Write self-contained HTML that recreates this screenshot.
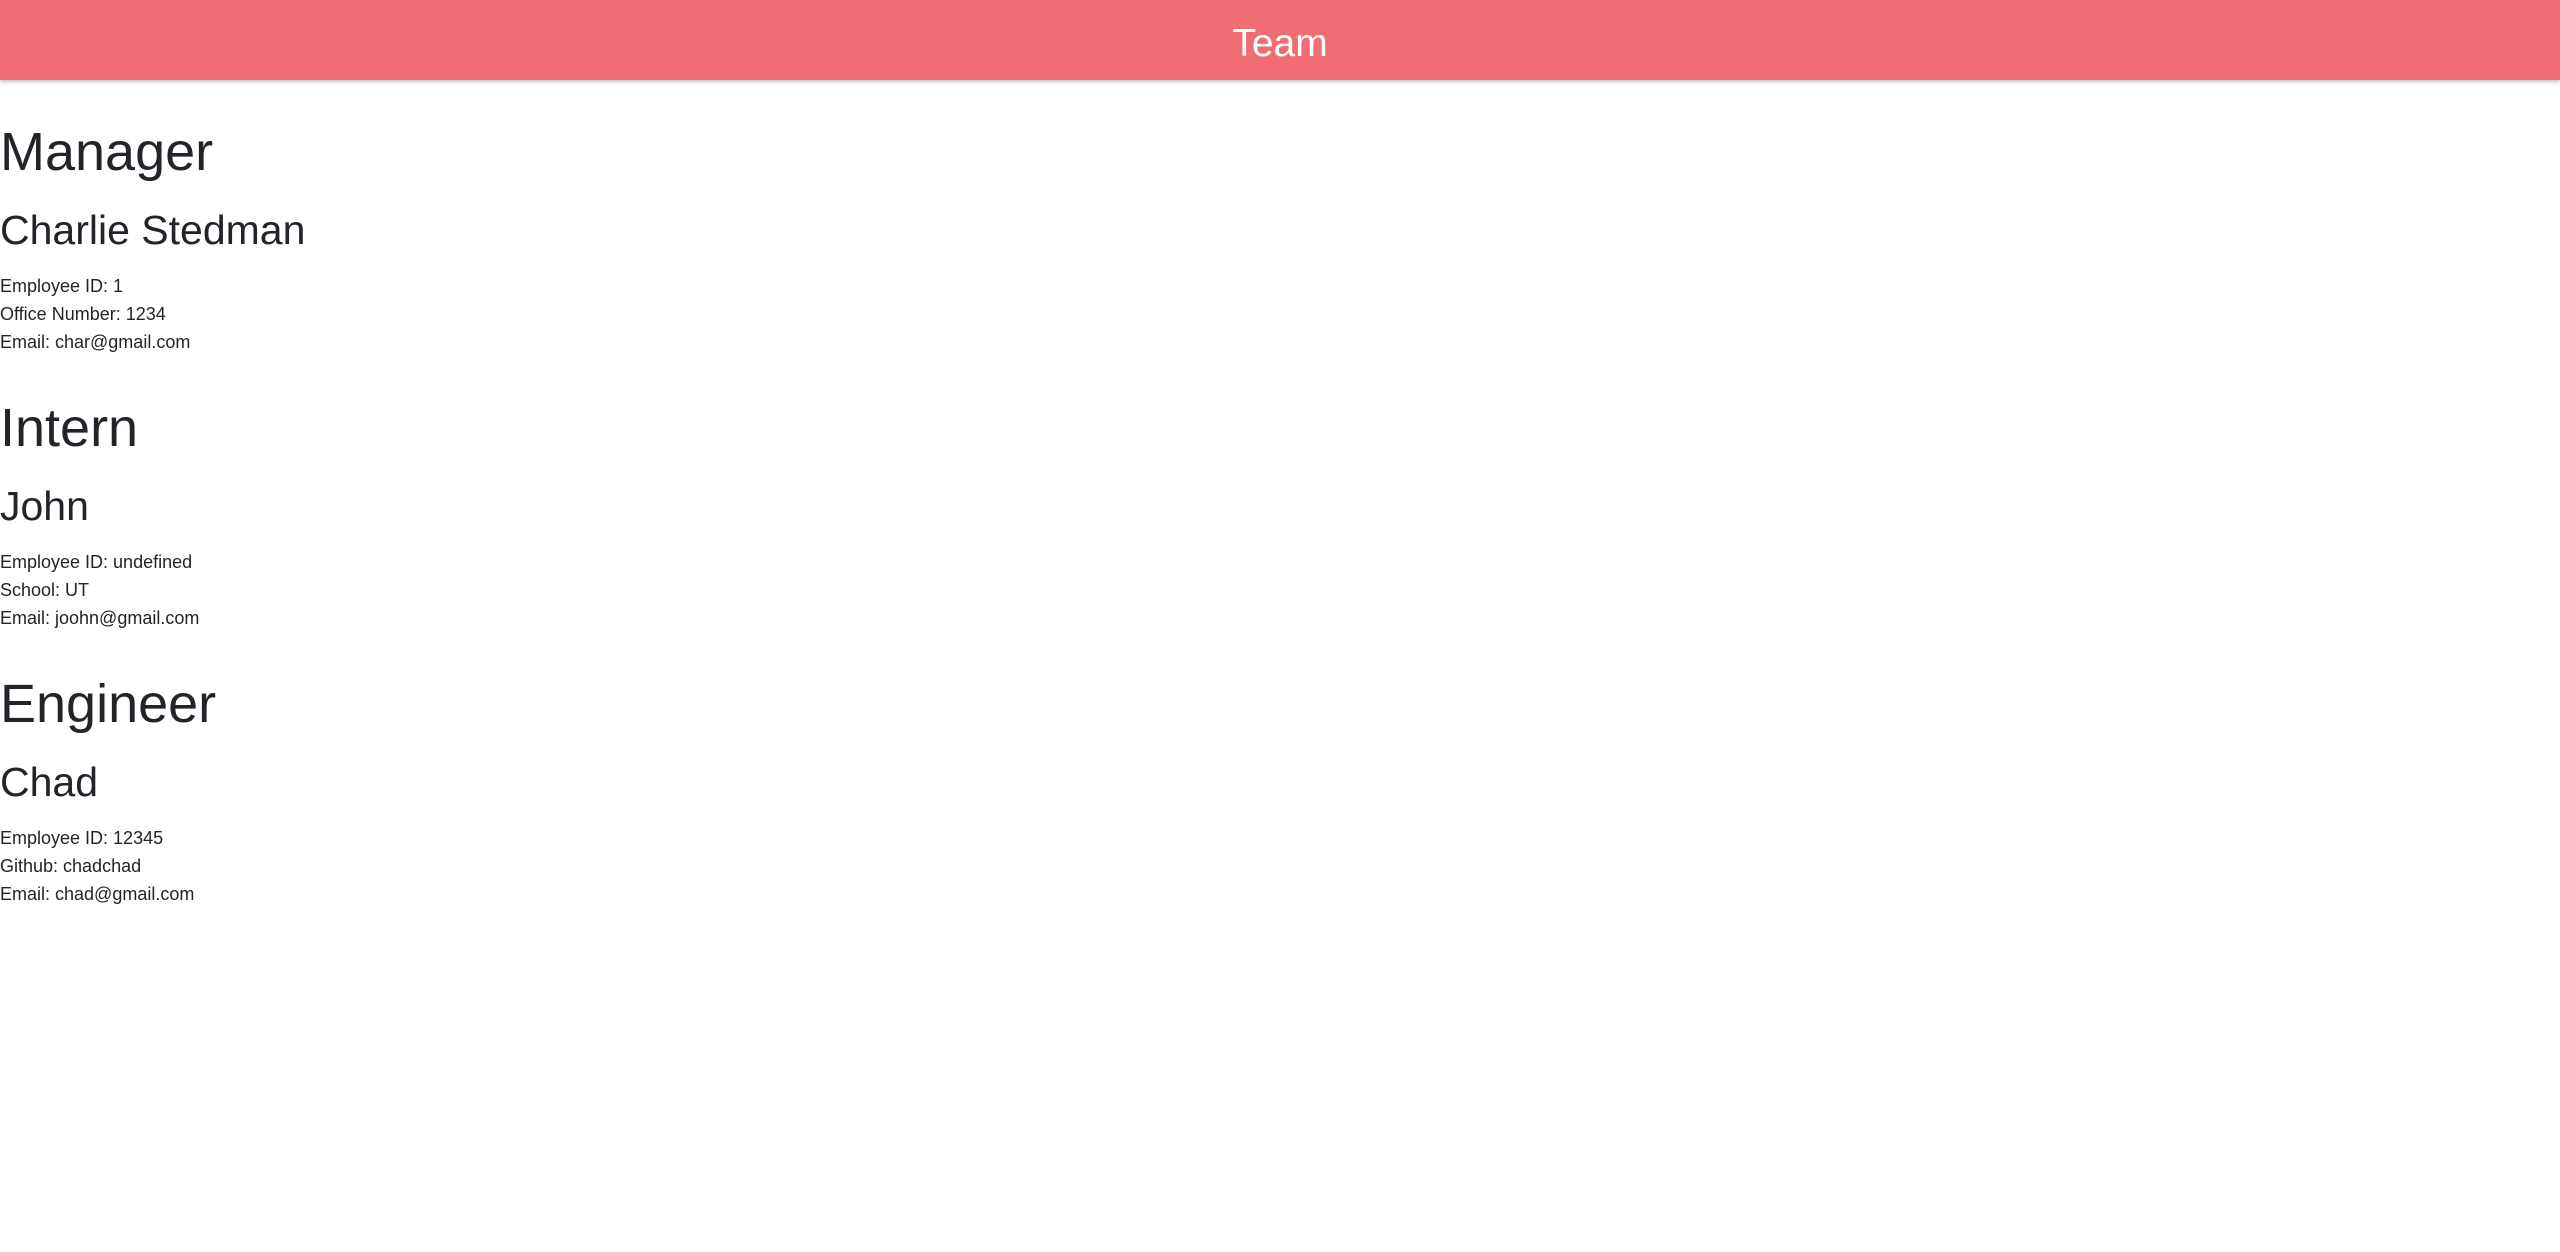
<!DOCTYPE html>
<html><head><meta charset="utf-8"><style>
body{margin:0;width:2560px;height:1252px;background:#fff;font-family:"Liberation Sans",sans-serif;color:#212529;position:relative;overflow:hidden}
.hdr{position:absolute;left:0;top:0;width:2560px;height:80px;background:#ef6e73;box-shadow:0 2px 4px rgba(0,0,0,.25)}
.t{position:absolute;white-space:nowrap;line-height:1}
.s{font-size:18px}
</style></head><body>
<div class="hdr"></div>
<div class="t" style="top:24px;left:0;width:2560px;text-align:center;font-size:39px;color:#fff">Team</div>

<div class="t" style="left:0;top:125px;font-size:54px">Manager</div>
<div class="t" style="left:0;top:210px;font-size:41px">Charlie Stedman</div>
<div class="t s" style="left:0;top:277px">Employee ID: 1</div>
<div class="t s" style="left:0;top:305px">Office Number: 1234</div>
<div class="t s" style="left:0;top:333px">Email: char@gmail.com</div>

<div class="t" style="left:0;top:401px;font-size:54px">Intern</div>
<div class="t" style="left:0;top:486px;font-size:41px">John</div>
<div class="t s" style="left:0;top:553px">Employee ID: undefined</div>
<div class="t s" style="left:0;top:581px">School: UT</div>
<div class="t s" style="left:0;top:609px">Email: joohn@gmail.com</div>

<div class="t" style="left:0;top:677px;font-size:54px">Engineer</div>
<div class="t" style="left:0;top:762px;font-size:41px">Chad</div>
<div class="t s" style="left:0;top:829px">Employee ID: 12345</div>
<div class="t s" style="left:0;top:857px">Github: chadchad</div>
<div class="t s" style="left:0;top:885px">Email: chad@gmail.com</div>
</body></html>
